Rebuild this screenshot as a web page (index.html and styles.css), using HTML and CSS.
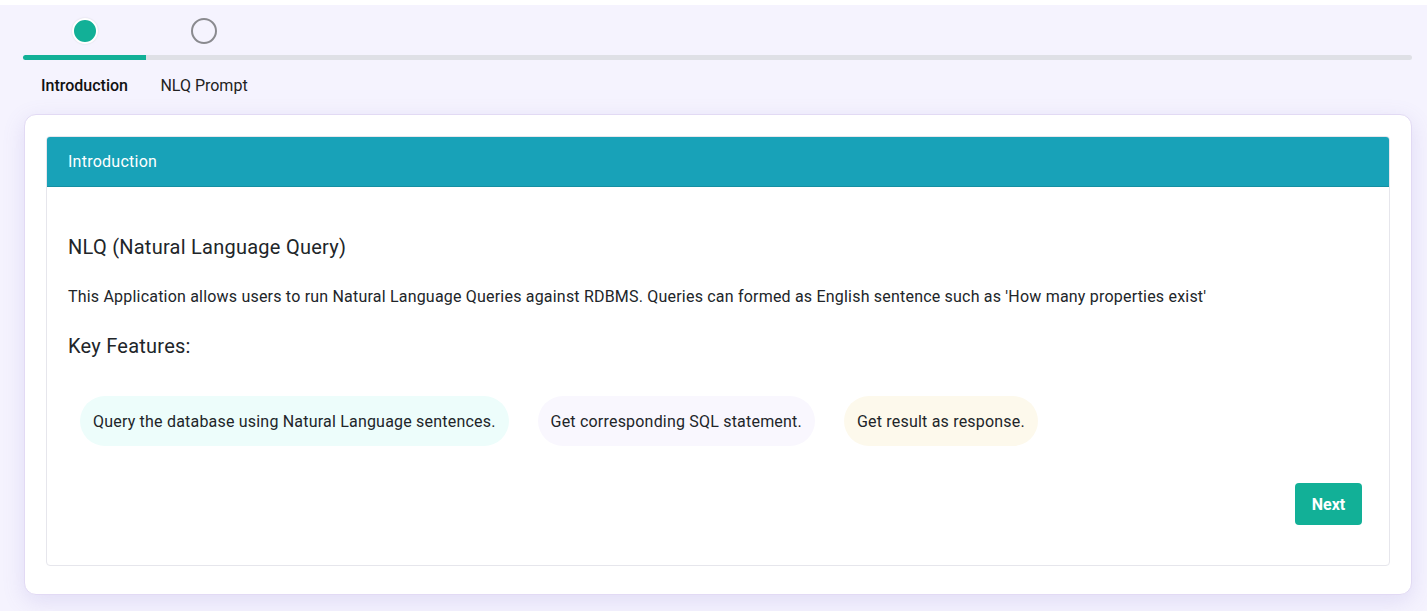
FILE: index.html
```html
<!DOCTYPE html>
<html lang="en">
<head>
<meta charset="utf-8">
<title>NLQ</title>
<link rel="stylesheet" href="styles.css">
</head>
<body>
<div class="page">
  <div class="stepper">
    <div class="step active">
      <div class="dot"></div>
      <div class="seg"></div>
      <div class="label">Introduction</div>
    </div>
    <div class="step">
      <div class="dot"></div>
      <div class="seg"></div>
      <div class="label">NLQ Prompt</div>
    </div>
    <div class="step rest">
      <div class="dot-space"></div>
      <div class="seg"></div>
    </div>
  </div>

  <div class="card">
    <div class="panel">
      <div class="panel-head">Introduction</div>
      <div class="panel-body">
        <h2 class="title">NLQ (Natural Language Query)</h2>
        <p class="desc">This Application allows users to run Natural Language Queries against RDBMS. Queries can formed as English sentence such as 'How many properties exist'</p>
        <h3 class="features-title">Key Features:</h3>
        <div class="pills">
          <span class="pill mint">Query the database using Natural Language sentences.</span>
          <span class="pill lilac">Get corresponding SQL statement.</span>
          <span class="pill cream">Get result as response.</span>
        </div>
        <div class="actions">
          <button class="btn-next">Next</button>
        </div>
      </div>
    </div>
  </div>
</div>
</body>
</html>
```
FILE: styles.css
```css
* { box-sizing: border-box; }
html, body { margin: 0; padding: 0; }
body {
  background: #ffffff;
  font-family: Roboto, "Liberation Sans", Arial, sans-serif;
  color: #212529;
  letter-spacing: 0.25px;
}
.page {
  margin-top: 5px;
  background: #f5f3fe;
  height: 606px;
  padding: 13px 15px 0 23px;
}
.stepper {
  display: flex;
  align-items: flex-start;
}
.step {
  display: flex;
  flex-direction: column;
  align-items: center;
}
.step.active { width: 123px; }
.step:nth-child(2) { width: 116px; }
.step.rest { flex: 1; }
.dot {
  width: 26px;
  height: 26px;
  border-radius: 50%;
  border: 2px solid #8a8a8f;
  background: transparent;
}
.dot-space { height: 26px; }
.step.active .dot {
  background: #12b097;
  border: 2px solid #ffffff;
  box-shadow: 0 0 2px rgba(0,0,0,0.12);
}
.seg {
  margin-top: 11px;
  width: 100%;
  height: 5px;
  background: #dfe0e6;
}
.step.active .seg {
  background: #12b097;
  border-radius: 3px 0 0 3px;
}
.step.rest .seg { border-radius: 0 3px 3px 0; }
.label {
  margin-top: 15px;
  font-size: 16px;
  line-height: 22px;
  color: #222;
  letter-spacing: 0;
  white-space: nowrap;
}
.step.active .label {
  font-weight: 500;
  color: #111;
}

.card {
  margin: 17px 0 0 1px;
  width: 1388px;
  height: 481px;
  background: #ffffff;
  border: 1px solid #e2daf4;
  border-radius: 12px;
  box-shadow: 0 6px 22px rgba(120, 100, 200, 0.16);
  padding: 21px 21px 28px 21px;
}
.panel {
  height: 100%;
  border: 1px solid #e6e6ec;
  border-radius: 4px;
  overflow: hidden;
  display: flex;
  flex-direction: column;
}
.panel-head {
  background: #18a2b8;
  color: #ffffff;
  font-size: 16px;
  line-height: 20px;
  padding: 15px 21px 15px 21px;
  height: 50px;
  border-bottom: 1px solid #158fa2;
}
.panel-body {
  padding: 0 21px;
  flex: 1;
}
.title {
  margin: 47px 0 0 0;
  font-size: 20px;
  font-weight: 400;
  line-height: 26px;
  color: #212529;
}
.desc {
  margin: 26px 0 0 0;
  font-size: 16px;
  line-height: 21px;
  letter-spacing: 0.2px;
  color: #212529;
}
.features-title {
  margin: 26px 0 0 0;
  font-size: 20px;
  font-weight: 400;
  line-height: 26px;
  color: #212529;
}
.pills {
  display: flex;
  gap: 29px;
  margin: 37px 0 0 12px;
}
.pill {
  height: 50px;
  padding: 0 13px;
  border-radius: 25px;
  display: inline-flex;
  align-items: center;
  font-size: 16px;
  letter-spacing: 0.2px;
  color: #212529;
}
.mint { background: #edfdfb; }
.lilac { background: #f9f7fe; }
.cream { background: #fdf9ec; }
.actions {
  display: flex;
  justify-content: flex-end;
  margin-top: 37px;
  padding-right: 6px;
}
.btn-next {
  width: 67px;
  height: 42px;
  border: none;
  border-radius: 4px;
  background: #12b097;
  color: #ffffff;
  font-family: Roboto, "Liberation Sans", Arial, sans-serif;
  font-weight: 700;
  font-size: 16px;
  letter-spacing: 0;
  cursor: pointer;
}
```
